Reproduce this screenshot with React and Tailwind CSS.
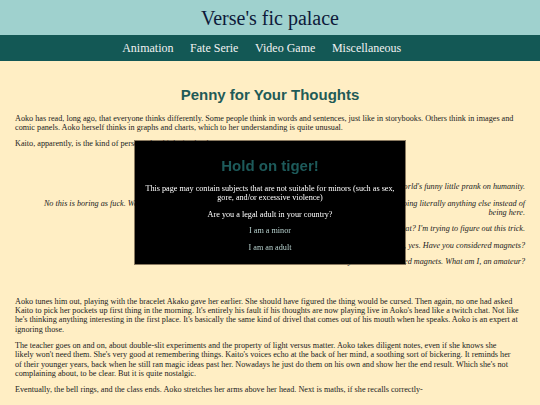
import React from 'react';

const serif = { fontFamily: '"Liberation Serif", Georgia, serif' };

const navLinks = ['Animation', 'Fate Serie', 'Video Game', 'Miscellaneous'];

const AgeGate = () => (
  <div className="fixed inset-0 flex items-center justify-center">
    <div
      className="w-[270px] bg-black px-[7px] pt-[16px] pb-[12px] text-center shadow-[0_0_0_1px_rgba(60,45,30,0.6)]"
      style={serif}
    >
      <h2 className="mb-[10px] font-['Liberation_Sans',Arial,sans-serif] text-[15px] font-bold leading-[17px] text-[#1d5a5a]">
        Hold on tiger!
      </h2>
      <p className="mb-[7px] text-[8.2px] leading-[9.4px] text-white">
        This page may contain subjects that are not suitable for minors (such as sex, gore, and/or excessive violence)
      </p>
      <p className="mb-[7px] text-[8.2px] leading-[9.4px] text-white">Are you a legal adult in your country?</p>
      <p className="mb-[7px] text-[8.2px] leading-[9.4px] text-[#b5cfcc]">I am a minor</p>
      <p className="text-[8.2px] leading-[9.4px] text-[#b5cfcc]">I am an adult</p>
    </div>
  </div>
);

export default function App() {
  return (
    <div className="min-h-[405px] bg-[#ffeec4]" style={serif}>
      <header className="flex h-[35px] items-center justify-center bg-[#9fd1ce]">
        <h1 className="text-[20px] leading-none text-[#0e1a3a]">Verse's fic palace</h1>
      </header>
      <nav className="flex h-[26px] items-center justify-center bg-[#135855] text-[12px] text-[#f2f2f2]">
        {navLinks.map((l) => (
          <a key={l} className="mr-[16.6px]">{l}</a>
        ))}
      </nav>

      <main className="px-[15px] pt-[25px] text-[8.2px] leading-[9.4px] text-[#222]">
        <h2 className="mb-[11px] text-center font-['Liberation_Sans',Arial,sans-serif] text-[15px] font-bold leading-[17px] text-[#1f5b57]">
          Penny for Your Thoughts
        </h2>
        <p className="mb-[6px]">
          Aoko has read, long ago, that everyone thinks differently. Some people think in words and sentences, just like in storybooks. Others think in images and comic panels. Aoko herself thinks in graphs and charts, which to her understanding is quite unusual.
        </p>
        <p>Kaito, apparently, is the kind of person who thinks in chat logs.</p>

        {/* Kaito's side of the conversation, right aligned */}
        <div className="mt-[34px] italic text-right">
          <p className="mb-[7px]">Honestly, physics is just the world's funny little prank on humanity.</p>
          <p className="mb-[7px]">
            No this is boring as fuck. We could be at the arcade right now, or at home playing video games, or even just doing literally anything else instead of
            <br />
            being here.
          </p>
          <p className="mb-[7px]">Wait, how does the light do that? I'm trying to figure out this trick.</p>
          <p className="mb-[7px]">Okay, the light goes through both slits, yes. Have you considered magnets?</p>
          <p>Obviously I have considered magnets. What am I, an amateur?</p>
        </div>

        <p className="mt-[30px] mb-[6.5px]">
          Aoko tunes him out, playing with the bracelet Akako gave her earlier. She should have figured the thing would be cursed. Then again, no one had asked Kaito to pick her pockets up first thing in the morning. It's entirely his fault if his thoughts are now playing live in Aoko's head like a twitch chat. Not like he's thinking anything interesting in the first place. It's basically the same kind of drivel that comes out of his mouth when he speaks. Aoko is an expert at ignoring those.
        </p>
        <p className="mb-[6.5px] pr-[12px]">
          The teacher goes on and on, about double-slit experiments and the property of light versus matter. Aoko takes diligent notes, even if she knows she likely won't need them. She's very good at remembering things. Kaito's voices echo at the back of her mind, a soothing sort of bickering. It reminds her of their younger years, back when he still ran magic ideas past her. Nowadays he just do them on his own and show her the end result. Which she's not complaining about, to be clear. But it is quite nostalgic.
        </p>
        <p>Eventually, the bell rings, and the class ends. Aoko stretches her arms above her head. Next is maths, if she recalls correctly-</p>
      </main>

      <AgeGate />
    </div>
  );
}
